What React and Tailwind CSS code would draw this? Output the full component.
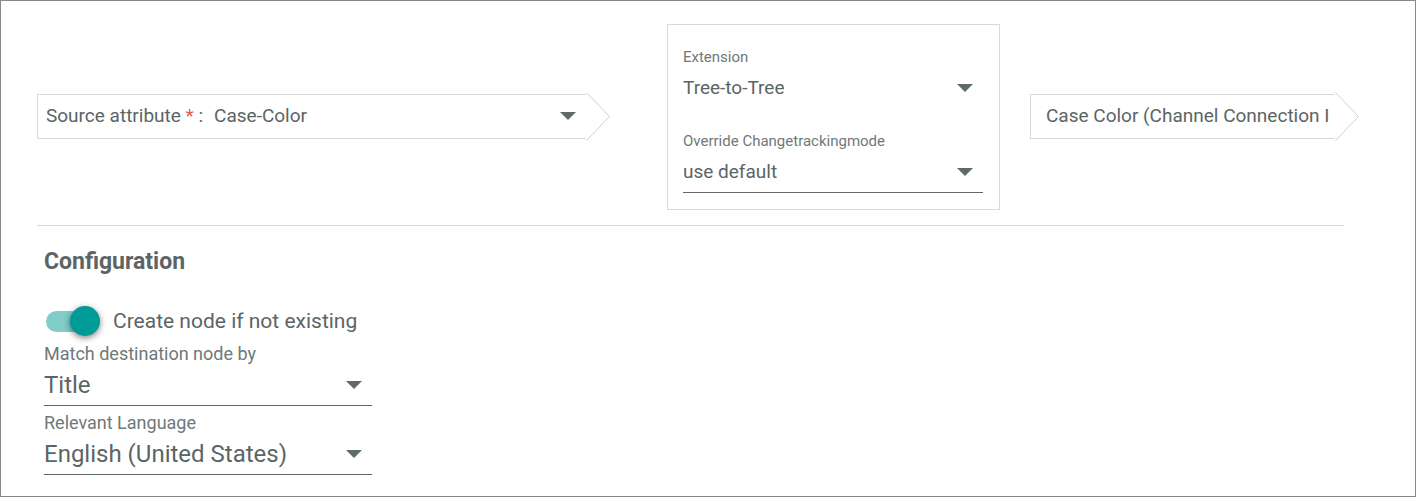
import { useState } from "react";

function Caret({ className }) {
  return (
    <svg
      viewBox="0 0 16 8"
      aria-hidden="true"
      className={`pointer-events-none col-start-1 row-start-1 h-2 w-4 self-center justify-self-end ${className}`}
    >
      <path d="M0 0H16L8 8Z" fill="#5f6b6b" />
    </svg>
  );
}

function Picker({ id, options, className, caretClass }) {
  return (
    <div className={`grid min-w-0 ${className}`}>
      <select
        id={id}
        className="col-start-1 row-start-1 w-full min-w-0 cursor-pointer appearance-none bg-transparent outline-none"
      >
        {options.map((option) => (
          <option key={option}>{option}</option>
        ))}
      </select>
      <Caret className={caretClass} />
    </div>
  );
}

function ArrowBox({ className, children }) {
  return (
    <div className={`flex items-center pb-[2px] ${className}`}>
      <div className="flex h-[45px] min-w-0 flex-1 items-center border border-r-0 border-[#d9d9d9]">
        {children}
      </div>
      <svg viewBox="0 0 24 49" aria-hidden="true" className="h-[49px] w-6 shrink-0">
        <path d="M0.5 0.5L23.5 24.5L0.5 48.5" fill="none" stroke="#cfcfcf" strokeWidth="1" />
      </svg>
    </div>
  );
}

export default function App() {
  const [createNode, setCreateNode] = useState(true);

  return (
    <main className="min-h-screen border border-[#888888] bg-white font-['Roboto',sans-serif] text-[#5b6566]">
      <section className="flex items-center pt-[23px] pr-14 pl-9 text-[19px] leading-6">
        <ArrowBox className="min-w-0 flex-1">
          <label htmlFor="source" className="shrink-0 pl-2 whitespace-pre">
            Source attribute <span className="text-[#e05a55]">*</span> :
          </label>
          <Picker
            id="source"
            options={["Case-Color", "Case-Material"]}
            className="ml-[11px] flex-1"
            caretClass="mr-[10px]"
          />
        </ArrowBox>

        <div className="ml-[57px] w-[333px] shrink-0 border border-[#d9d9d9] pt-[22px] pr-4 pb-4 pl-[15px]">
          <label htmlFor="extension" className="block text-[15px] leading-5 text-[#6f7979]">
            Extension
          </label>
          <Picker
            id="extension"
            options={["Tree-to-Tree", "None"]}
            className="h-[42px]"
            caretClass="mr-[10px]"
          />
          <label htmlFor="tracking" className="mt-[22px] block text-[15px] leading-5 text-[#6f7979]">
            Override Changetrackingmode
          </label>
          <Picker
            id="tracking"
            options={["use default", "enabled", "disabled"]}
            className="h-[42px] border-b border-[#5f6767]"
            caretClass="mr-[10px]"
          />
        </div>

        <ArrowBox className="ml-[30px] w-[329px] shrink-0">
          <span className="pl-[15px] whitespace-nowrap">Case Color (Channel Connection I</span>
        </ArrowBox>
      </section>

      <hr className="mt-[15px] mr-[71px] ml-9 border-[#d9d9d9]" />

      <section className="pl-[43px]">
        <h2 className="pt-5 text-[23px] leading-8 font-bold">Configuration</h2>

        <label className="mt-[27px] flex h-8 w-fit cursor-pointer items-center gap-[13px] text-[21px] leading-6">
          <span className="grid h-[30px] w-14 items-center pl-[2px]">
            <input
              type="checkbox"
              role="switch"
              checked={createNode}
              onChange={(event) => setCreateNode(event.target.checked)}
              className="peer col-start-1 row-start-1 h-[21px] w-[50px] cursor-pointer appearance-none rounded-full bg-[#bdbdbd] checked:bg-[#80cdca]"
            />
            <span className="pointer-events-none col-start-1 row-start-1 size-[30px] rounded-full bg-[#f5f5f5] shadow-[0_2px_6px_rgba(0,0,0,0.5)] peer-checked:translate-x-6 peer-checked:bg-[#009b97]" />
          </span>
          Create node if not existing
        </label>

        <div className="w-[328px]">
          <label htmlFor="match" className="mt-[5px] block text-[18px] leading-6 text-[#6f7979]">
            Match destination node by
          </label>
          <Picker
            id="match"
            options={["Title", "Identifier"]}
            className="h-10 border-b border-[#5f6767] pb-[2px] text-[24px] leading-8"
            caretClass="mr-[10px]"
          />
          <label htmlFor="language" className="mt-[5px] block text-[18px] leading-6 text-[#6f7979]">
            Relevant Language
          </label>
          <Picker
            id="language"
            options={["English (United States)", "German (Germany)"]}
            className="h-10 border-b border-[#5f6767] pb-[2px] text-[24px] leading-8"
            caretClass="mr-[10px]"
          />
        </div>
      </section>
    </main>
  );
}
